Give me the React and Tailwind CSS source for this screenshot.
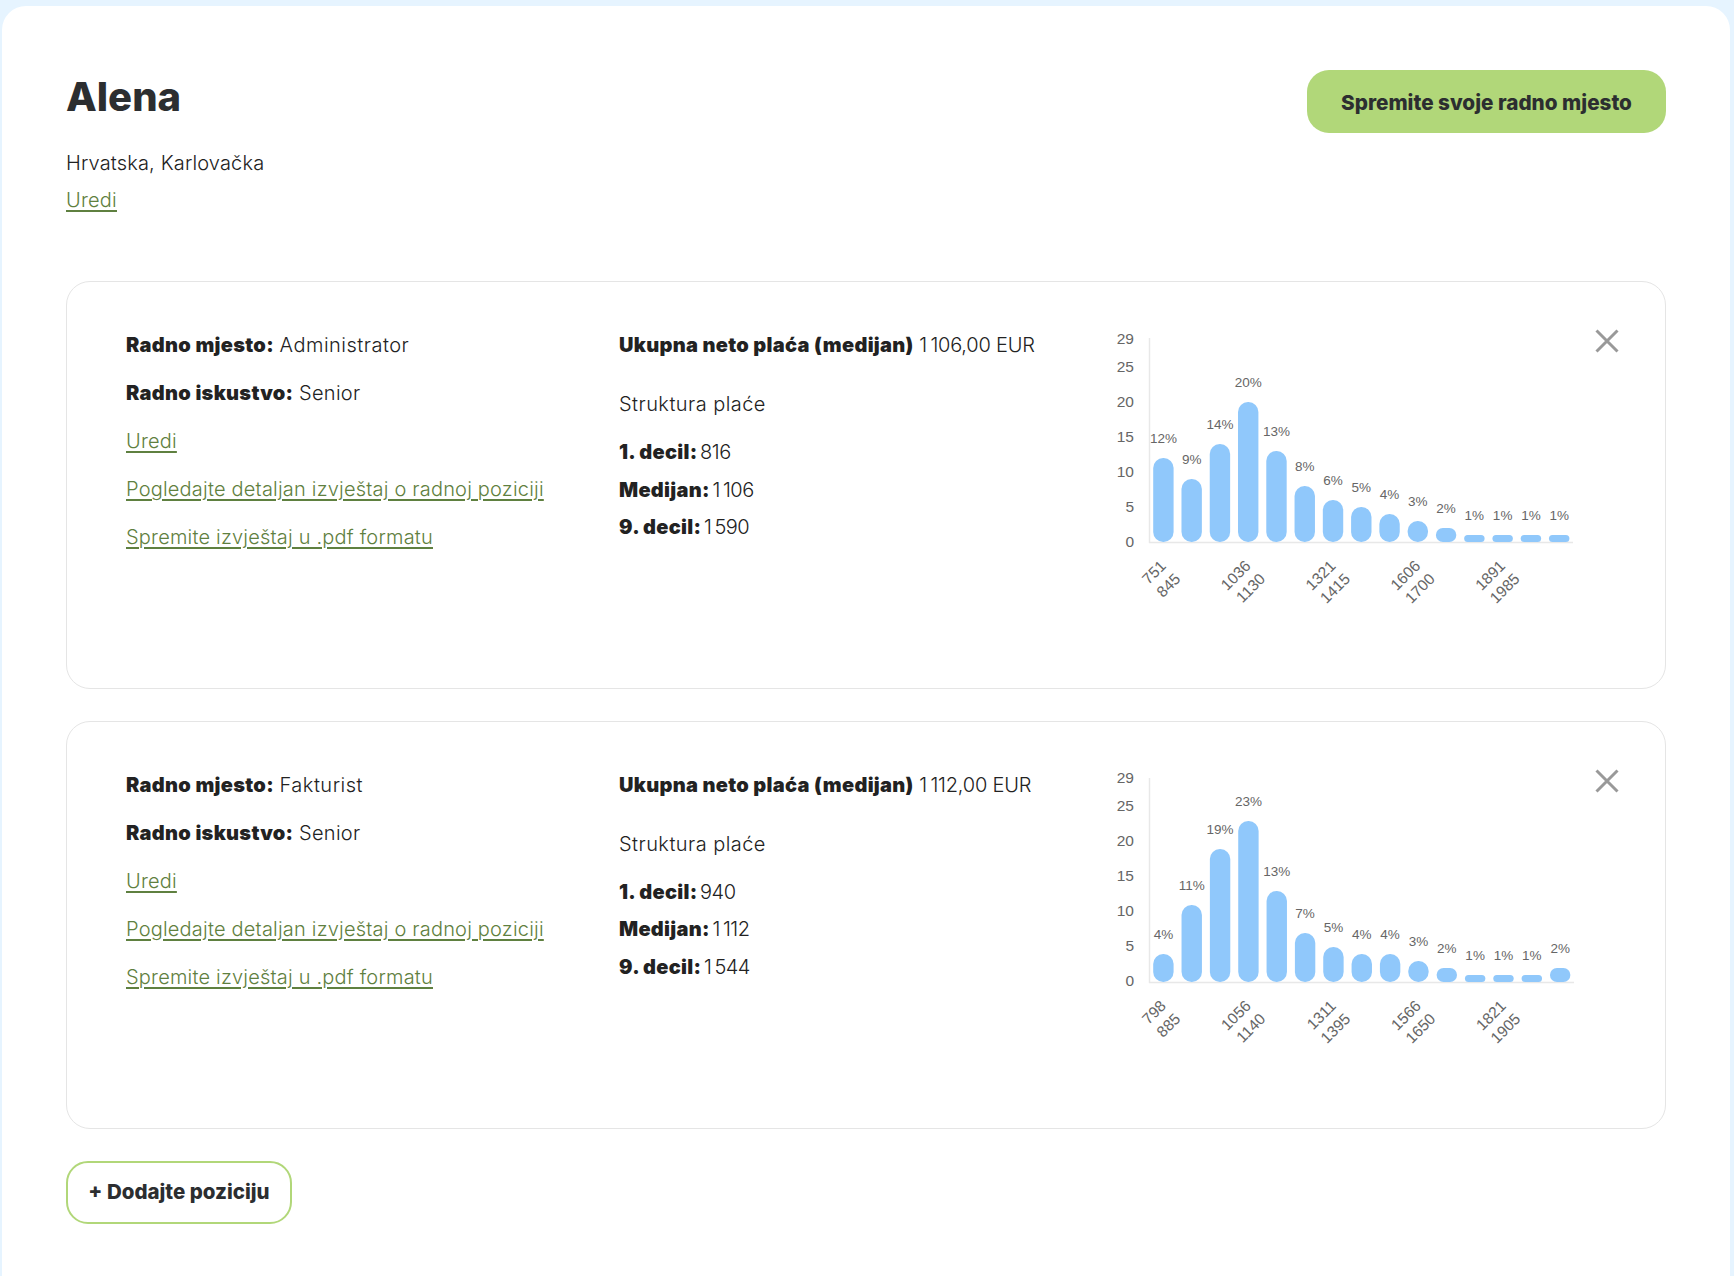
const bodyFont = 'font-["Inter",sans-serif]';

const positions = [
  {
    role: 'Administrator',
    level: 'Senior',
    total: '1\u2009106,00 EUR',
    first: '816',
    median: '1\u2009106',
    ninth: '1\u2009590',
    step: 28.27,
    axisEnd: 473,
    tickShift: 1,
    bars: [12, 9, 14, 20, 13, 8, 6, 5, 4, 3, 2, 1, 1, 1, 1],
    ticks: [['751', '845'], ['1036', '1130'], ['1321', '1415'], ['1606', '1700'], ['1891', '1985']],
  },
  {
    role: 'Fakturist',
    level: 'Senior',
    total: '1\u2009112,00 EUR',
    first: '940',
    median: '1\u2009112',
    ninth: '1\u2009544',
    step: 28.34,
    axisEnd: 474,
    tickShift: 2,
    bars: [4, 11, 19, 23, 13, 7, 5, 4, 4, 3, 2, 1, 1, 1, 2],
    ticks: [['798', '885'], ['1056', '1140'], ['1311', '1395'], ['1566', '1650'], ['1821', '1905']],
  },
];

const ZERO = 222;
const UNIT = 7;

const Chart = ({ bars, ticks, step, axisEnd, tickShift }) => (
  <svg width="480" height="290" className="block shrink-0" style={{ fontFamily: '"Liberation Sans", Arial, sans-serif' }}>
    <line x1="49.5" y1="18" x2="49.5" y2={ZERO + 1} stroke="#e8e8e8" strokeWidth="1.5" />
    <line x1="49" y1={ZERO + 0.5} x2={axisEnd} y2={ZERO + 0.5} stroke="#e8e8e8" strokeWidth="1.5" />
    {[29, 25, 20, 15, 10, 5, 0].map((v) => (
      <text key={v} x="34" y={ZERO - tickShift - v * UNIT} textAnchor="end" dominantBaseline="central" fontSize="15.5" fill="#666">
        {v}
      </text>
    ))}
    {bars.map((v, i) => {
      const x = 53.2 + i * step;
      const h = v * UNIT;
      return (
        <g key={i}>
          <rect x={x} y={ZERO - h} width="20.4" height={h} rx={Math.min(10, h / 2)} fill="#90c8fb" />
          <text x={x + 10.2} y={ZERO - h - 20} textAnchor="middle" dominantBaseline="central" fontSize="13.5" fill="#666">
            {v}%
          </text>
        </g>
      );
    })}
    {ticks.map((pair, i) => {
      const cx = 63 + i * 3 * step;
      return (
        <g key={i} fontSize="15.5" fill="#666" textAnchor="end" dominantBaseline="central">
          <text x={cx} y="243" transform={`rotate(-45 ${cx} 243)`}>{pair[0]}</text>
          <text x={cx + 14.5} y="256" transform={`rotate(-45 ${cx + 14.5} 256)`}>{pair[1]}</text>
        </g>
      );
    })}
  </svg>
);

const CardLink = ({ children }) => (
  <a href="#" className="block w-fit text-[#5f8040] underline underline-offset-[3px] decoration-[1.5px] font-[350] tracking-[0.2px]">
    {children}
  </a>
);

const Label = ({ children }) => <b className="font-black tracking-[0.3px]">{children}</b>;

const Value = ({ children }) => <span className="font-[350] tracking-[-0.2px]">{children}</span>;

const Decile = ({ label, value }) => (
  <p>
    <Label>{label}</Label> <span className="-ml-[3px] font-[350] tracking-[-0.5px]">{value}</span>
  </p>
);

const PositionCard = ({ item, className }) => (
  <div className={`relative flex h-[408px] rounded-[24px] border border-[#e5e5e5] pl-[59px] pt-[38px] ${className}`}>
    <div className="w-[493px] shrink-0 pt-[11px] flex flex-col gap-[20px] text-[20px] leading-[28px]">
      <p><Label>Radno mjesto:</Label> <span className="font-[350] tracking-[0.5px]">{item.role}</span></p>
      <p><Label>Radno iskustvo:</Label> <span className="font-[350] tracking-[0.3px]">{item.level}</span></p>
      <CardLink>Uredi</CardLink>
      <CardLink>Pogledajte detaljan izvještaj o radnoj poziciji</CardLink>
      <CardLink>Spremite izvještaj u .pdf formatu</CardLink>
    </div>
    <div className="w-[481px] shrink-0 pt-[11px] text-[20px] leading-[28px]">
      <p><Label>Ukupna neto plaća (medijan)</Label> <Value>{item.total}</Value></p>
      <p className="mt-[31px] font-[350] tracking-[0.45px]">Struktura plaće</p>
      <div className="mt-[20px] flex flex-col gap-[9.5px]">
        <Decile label="1. decil:" value={item.first} />
        <Decile label="Medijan:" value={item.median} />
        <Decile label="9. decil:" value={item.ninth} />
      </div>
    </div>
    <Chart bars={item.bars} ticks={item.ticks} step={item.step} axisEnd={item.axisEnd} tickShift={item.tickShift} />
    <button type="button" className="absolute top-[47px] right-[46px]">
      <svg width="24" height="24" viewBox="0 0 24 24" fill="none" stroke="#999" strokeWidth="3" className="block">
        <path d="M1.5 1.5 22.5 22.5M22.5 1.5 1.5 22.5" />
      </svg>
    </button>
  </div>
);

const App = () => (
  <div className={`min-h-screen h-[1276px] overflow-hidden bg-[#e6f4ff] pt-[6px] pl-[2px] pr-[4px] text-[#222] ${bodyFont}`}>
    <div className="h-full rounded-t-[24px] bg-white px-[64px] pt-[64px]">
      <div className="flex items-start justify-between h-[211px]">
        <div>
          <h1 className="text-[40px] leading-[54px] font-extrabold text-[#2c2e30]">Alena</h1>
          <p className="mt-[25px] text-[20px] leading-[28px] font-[350] tracking-[0.15px]">Hrvatska, Karlovačka</p>
          <a href="#" className="mt-[9px] block w-fit text-[20px] leading-[28px] font-[350] tracking-[0.22px] text-[#5f8040] underline underline-offset-[3px] decoration-[1.5px]">
            Uredi
          </a>
        </div>
        <button type="button" className="h-[63px] w-[359px] rounded-[22px] bg-[#b1d779] pt-[2px] text-[20.7px] font-extrabold text-[#2c2e30]">
          Spremite svoje radno mjesto
        </button>
      </div>
      <PositionCard item={positions[0]} className="" />
      <PositionCard item={positions[1]} className="mt-[31.5px]" />
      <button type="button" className="mt-[32px] h-[63px] w-[226px] rounded-[22px] border-2 border-[#b1d779] text-[20.5px] font-extrabold text-[#2c2e30]">
        + Dodajte poziciju
      </button>
    </div>
  </div>
);

export default App;
